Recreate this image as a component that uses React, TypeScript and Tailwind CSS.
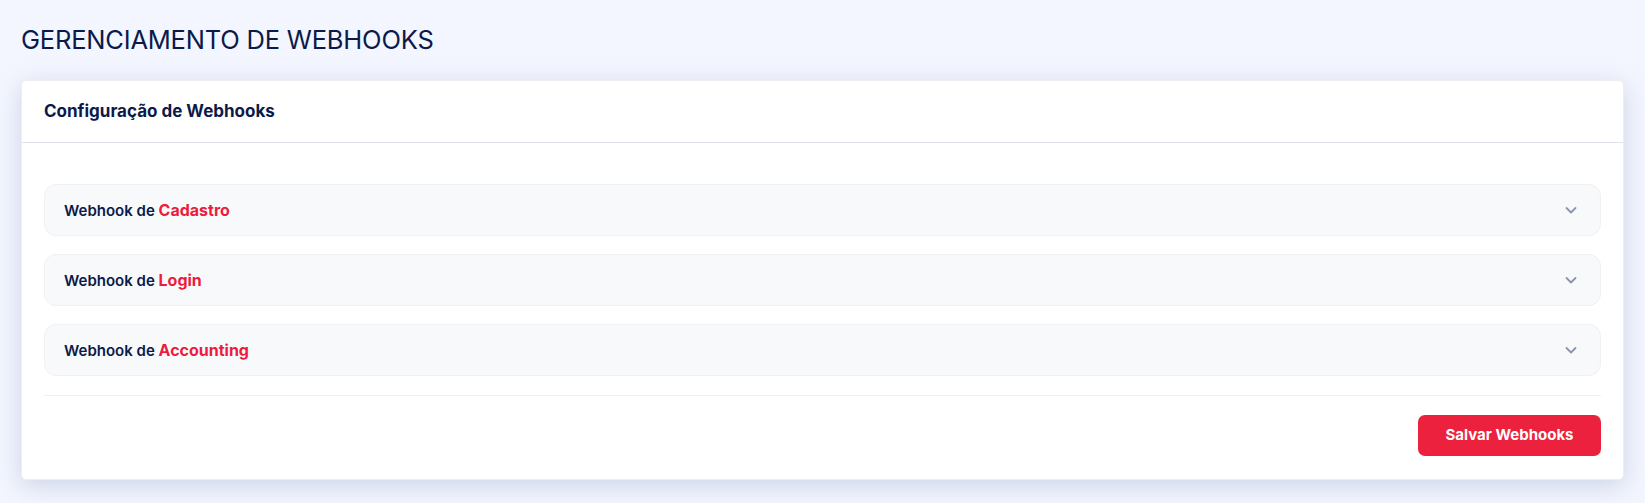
import React from "react";

const items = ["Cadastro", "Login", "Accounting"];

function Chevron() {
  return (
    <svg width="14" height="14" viewBox="0 0 14 14" fill="none" className="text-[#8a94b0]">
      <path d="M2.5 5l4.5 4.5L11.5 5" stroke="currentColor" strokeWidth="1.8" strokeLinecap="round" strokeLinejoin="round" />
    </svg>
  );
}

export default function App() {
  return (
    <div className="min-h-[503px] bg-[#f3f6fe] px-[21px] pt-[24px] pb-[24px] text-[#0b1a4a]" style={{ fontFamily: "Inter, 'Noto Sans', sans-serif" }}>
      <h1 className="text-[25.5px] leading-[32px] font-normal tracking-[-0.2px]">GERENCIAMENTO DE WEBHOOKS</h1>
      <div className="mt-[24px] bg-white rounded-[5px] shadow-[0_6px_24px_rgba(160,170,205,0.45)] border border-[#eceef4]">
        <div className="h-[62px] flex items-center px-[22px] border-b border-[#dfe2ea]">
          <h2 className="text-[17px] font-bold">Configuração de Webhooks</h2>
        </div>
        <div className="px-[22px] pt-[41px] pb-[23px]">
          <div className="flex flex-col gap-[18px]">
            {items.map((it) => (
              <div key={it} className="h-[52px] flex items-center justify-between rounded-[12px] bg-[#f8f9fb] border border-[#f0f1f4] pl-[19px] pr-[22px]">
                <span className="text-[15px] font-semibold">
                  Webhook de <span className="text-[#ec1c3c] text-[16px] font-bold">{it}</span>
                </span>
                <Chevron />
              </div>
            ))}
          </div>
          <div className="mt-[19px] border-t border-[#eff0f3]" />
          <div className="mt-[19px] flex justify-end">
            <button className="h-[41px] w-[183px] rounded-[7px] bg-[#ec213e] text-white text-[15px] font-bold">Salvar Webhooks</button>
          </div>
        </div>
      </div>
    </div>
  );
}
